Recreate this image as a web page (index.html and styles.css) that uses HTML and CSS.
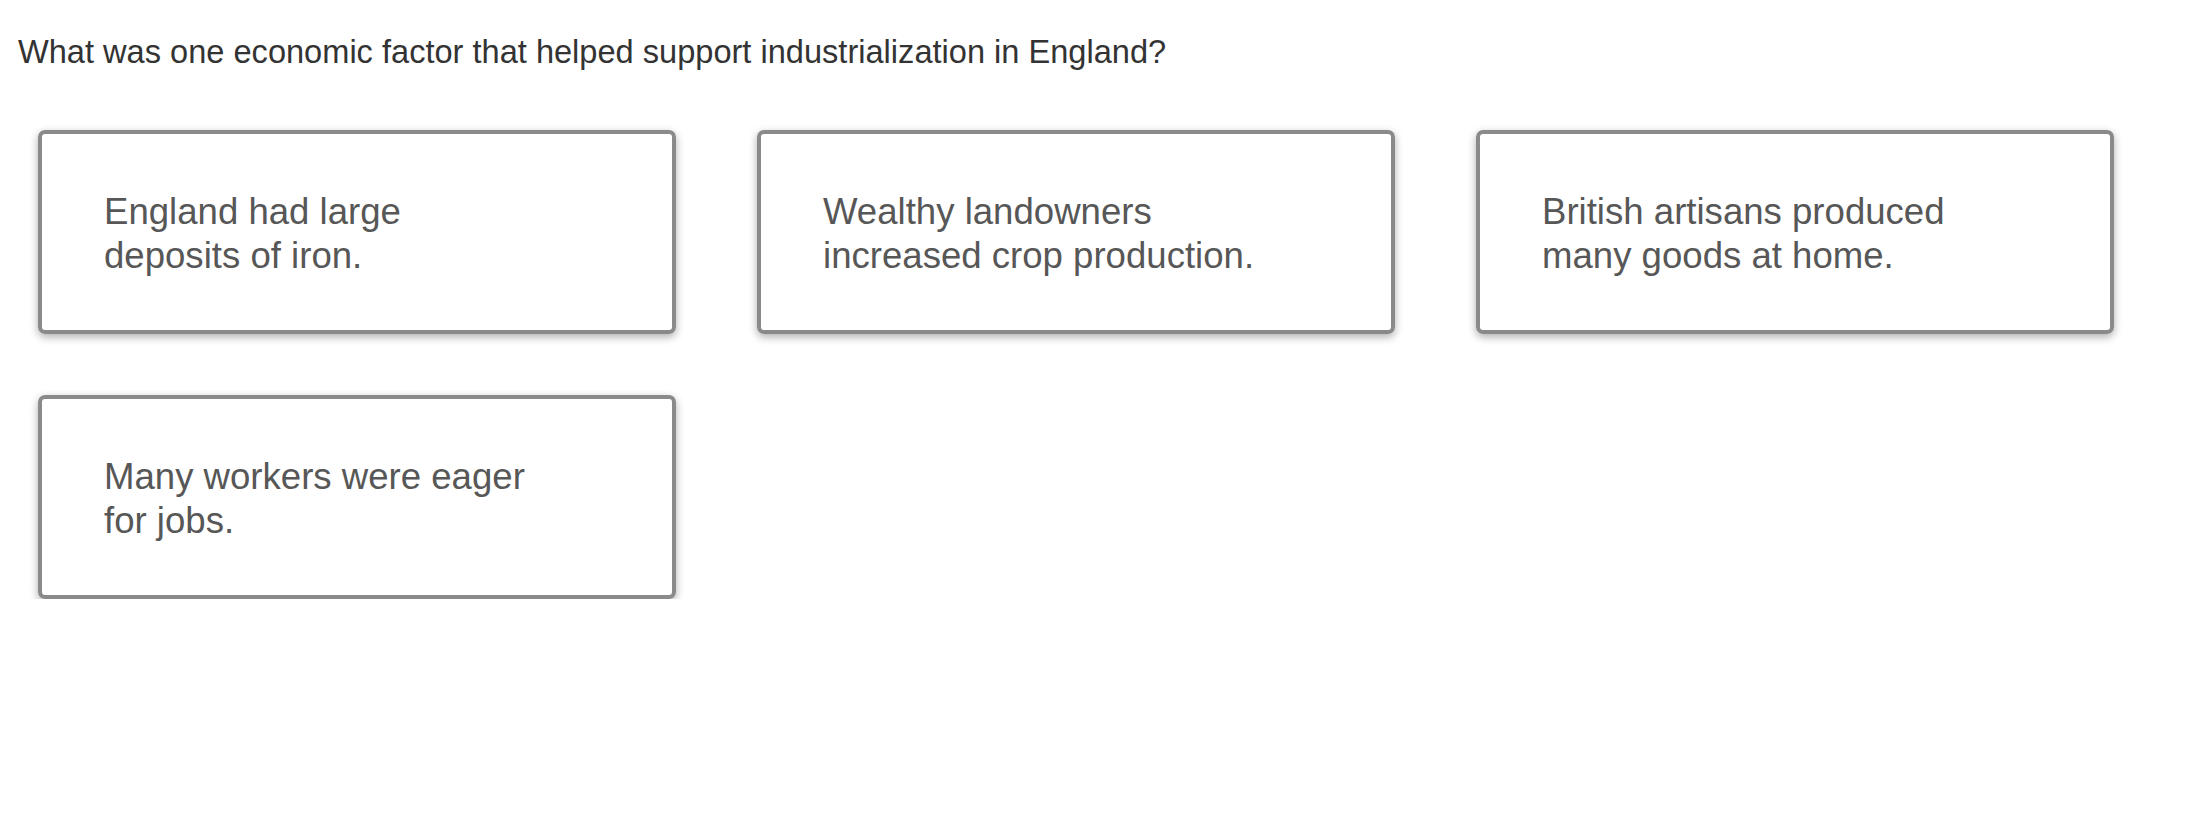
FILE: index.html
```html
<!DOCTYPE html>
<html>
<head>
<meta charset="utf-8">
<link rel="stylesheet" href="styles.css">
</head>
<body>
<div class="page">
  <p class="question">What was one economic factor that helped support industrialization in England?</p>
  <div class="choices">
    <div class="card"><p class="card-text">England had large<br>deposits of iron.</p></div>
    <div class="card"><p class="card-text">Wealthy landowners<br>increased crop production.</p></div>
    <div class="card"><p class="card-text">British artisans produced<br>many goods at home.</p></div>
    <div class="card"><p class="card-text">Many workers were eager<br>for jobs.</p></div>
  </div>
</div>
</body>
</html>
```

FILE: styles.css
```css
html, body {
  margin: 0;
  padding: 0;
  background: #fff;
}
.page {
  font-family: "Liberation Sans", Arial, sans-serif;
  padding: 0 0 0 18px;
}
.question {
  margin: 0;
  padding-top: 33px;
  font-size: 32.6px;
  line-height: 38px;
  color: #333;
}
.choices {
  display: grid;
  grid-template-columns: repeat(3, 638px);
  column-gap: 81px;
  row-gap: 61px;
  margin-top: 59px;
  margin-left: 20px;
}
.card {
  box-sizing: border-box;
  height: 204px;
  border: 4px solid #8a8a8a;
  border-radius: 7px;
  box-shadow: 0 3px 8px rgba(0,0,0,0.32);
  display: flex;
  align-items: center;
  padding: 3px 0 0 62px;
}
.card-text {
  margin: 0;
  font-size: 36.6px;
  line-height: 44px;
  color: #575757;
}
```
